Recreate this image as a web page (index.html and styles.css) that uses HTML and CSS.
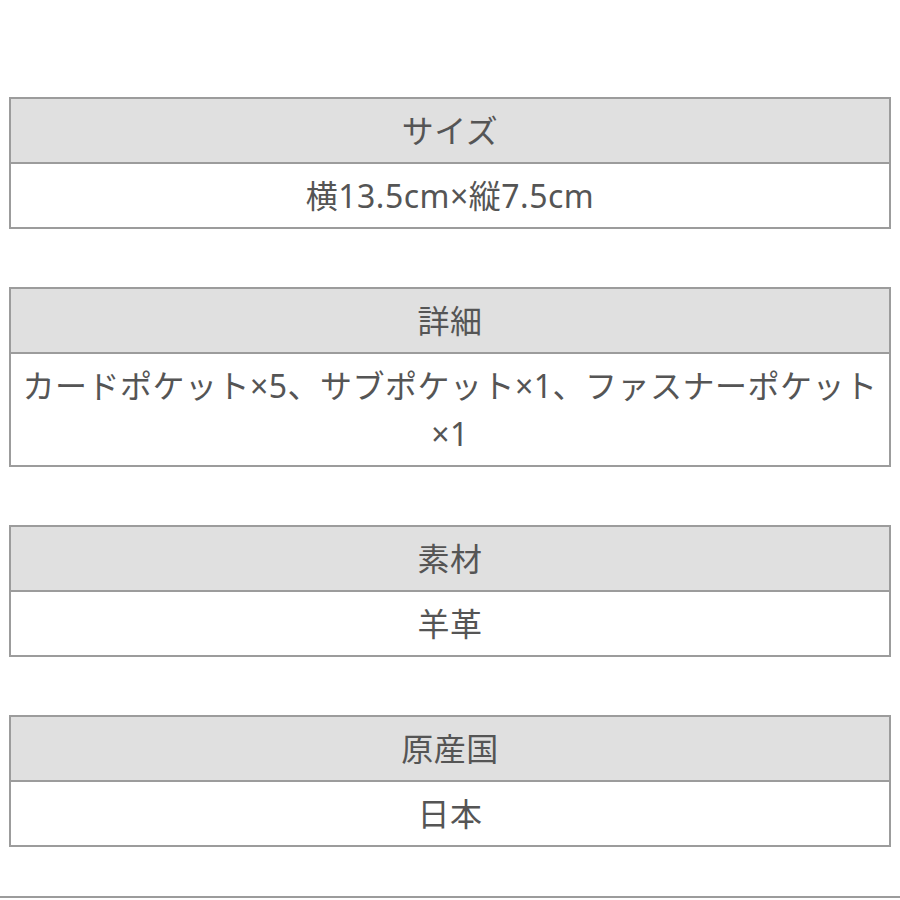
FILE: index.html
```html
<!DOCTYPE html>
<html lang="ja">
<head>
<meta charset="utf-8">
<link rel="stylesheet" href="styles.css">
</head>
<body>
<div class="page">
  <div class="spec">
    <div class="spec-head">サイズ</div>
    <div class="spec-body">横13.5cm×縦7.5cm</div>
  </div>
  <div class="spec">
    <div class="spec-head">詳細</div>
    <div class="spec-body">カードポケット×5、サブポケット×1、ファスナーポケット×1</div>
  </div>
  <div class="spec">
    <div class="spec-head">素材</div>
    <div class="spec-body">羊革</div>
  </div>
  <div class="spec">
    <div class="spec-head">原産国</div>
    <div class="spec-body">日本</div>
  </div>
  <div class="next-line"></div>
</div>
</body>
</html>
```
FILE: styles.css
```css
html, body {
  margin: 0;
  padding: 0;
  background: #fff;
}
body {
  font-family: "Noto Sans", "Noto Sans CJK JP", sans-serif;
  color: #555;
  font-size: 32px;
  letter-spacing: 0.5px;
}
.page {
  padding: 97px 9px 0 9px;
  display: flex;
  flex-direction: column;
  gap: 58px;
  overflow: hidden;
  height: 803px;
}
.spec {
  border: 2px solid #9c9c9c;
  display: flex;
  flex-direction: column;
}
.spec-head {
  background: #e0e0e0;
  border-bottom: 2px solid #9c9c9c;
  text-align: center;
  line-height: 48px;
  padding: 8px 4px 7px;
}
.spec-body {
  background: #fff;
  text-align: center;
  line-height: 48px;
  padding: 8px 4px 7px;
}
.next-line {
  margin: -9px -9px 0 -9px;
  border-top: 2px solid #9c9c9c;
}
```
